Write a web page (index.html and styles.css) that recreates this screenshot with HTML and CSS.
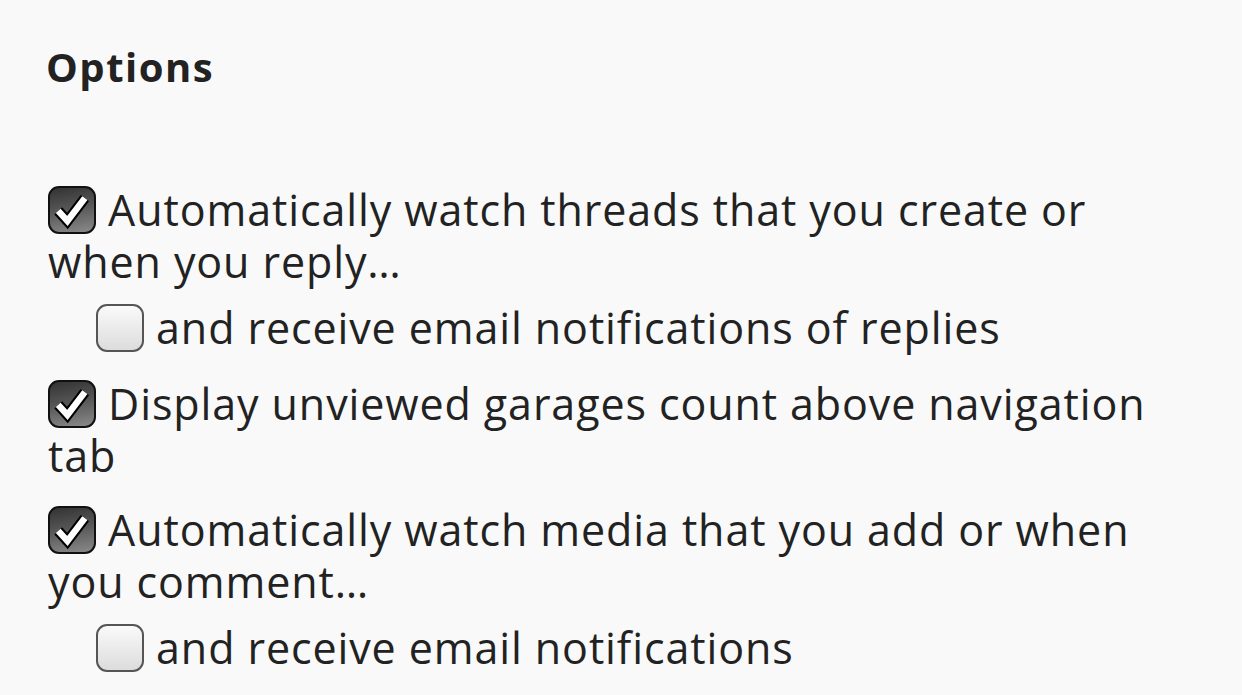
FILE: index.html
```html
<!DOCTYPE html>
<html lang="en">
<head>
    <meta charset="UTF-8">
    <meta name="viewport" content="width=device-width, initial-scale=1.0">
    <title>Options</title>
    <link rel="stylesheet" href="styles.css">
</head>
<body>
    <div class="container">
        <h2 class="title">Options</h2>
        <ul class="options">
            <li class="option">
                <span class="box checked"><svg viewBox="0 0 48 48"><path class="outline" d="M9 25 L19 36 L38 11" /><path class="mark" d="M9 25 L19 36 L38 11" /></svg></span>
                Automatically watch threads that you create or when you reply…
            </li>
            <li class="option sub">
                <span class="box"></span>
                and receive email notifications of replies
            </li>
            <li class="option">
                <span class="box checked"><svg viewBox="0 0 48 48"><path class="outline" d="M9 25 L19 36 L38 11" /><path class="mark" d="M9 25 L19 36 L38 11" /></svg></span>
                Display unviewed garages count above navigation tab
            </li>
            <li class="option">
                <span class="box checked"><svg viewBox="0 0 48 48"><path class="outline" d="M9 25 L19 36 L38 11" /><path class="mark" d="M9 25 L19 36 L38 11" /></svg></span>
                Automatically watch media that you add or when you comment…
            </li>
            <li class="option sub">
                <span class="box"></span>
                and receive email notifications
            </li>
        </ul>
    </div>
</body>
</html>
```

FILE: styles.css
```css
body {
    background-color: #f9f9f9;
    color: #222;
    font-family: 'Open Sans', 'Noto Sans', sans-serif;
    margin: 0;
}

.container {
    padding: 0 48px 0 48px;
}

.title {
    font-size: 40px;
    font-weight: 700;
    letter-spacing: 1.5px;
    margin: 0 0 0 -2px;
    padding-top: 40px;
    line-height: 54px;
    color: #222;
}

.options {
    list-style: none;
    margin: 0;
    padding: 0;
    padding-top: 90px;
}

.option {
    font-size: 43px;
    letter-spacing: 0.9px;
    line-height: 52px;
    margin-bottom: 22px;
}

.option.sub {
    padding-left: 48px;
    margin-top: -8px;
    margin-bottom: 24px;
}

.box {
    display: inline-block;
    box-sizing: border-box;
    width: 48px;
    height: 48px;
    border: 2px solid #555;
    border-radius: 11px;
    background: linear-gradient(to bottom, #fafafa, #dcdcdc);
    vertical-align: -8px;
    margin-right: 0;
}

.box.checked {
    border-color: #111;
    background: linear-gradient(170deg, #333 0%, #555 45%, #8a8a8a 100%);
}

.box svg {
    width: 44px;
    height: 44px;
    display: block;
}

.box svg path {
    fill: none;
    stroke-linejoin: miter;
    stroke-linecap: butt;
}

.box svg .outline {
    stroke: #000;
    stroke-width: 11.5;
}

.box svg .mark {
    stroke: #fff;
    stroke-width: 7;
}
```
